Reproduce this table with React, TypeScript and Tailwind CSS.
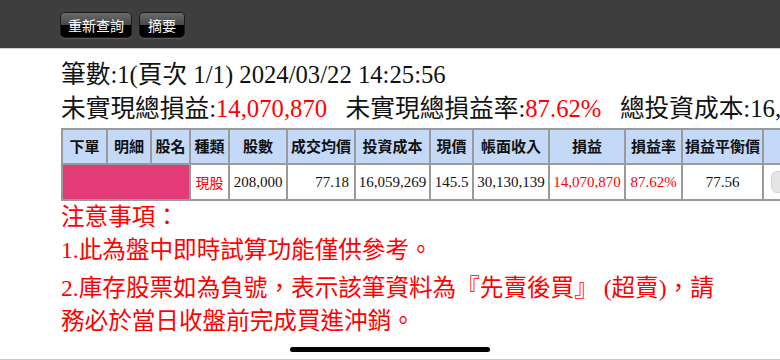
const font = { fontFamily: '"Liberation Serif", "Noto Sans CJK TC", serif' };

const cols = [
  { label: '下單', w: 45 },
  { label: '明細', w: 44 },
  { label: '股名', w: 39 },
  { label: '種類', w: 39 },
  { label: '股數', w: 58 },
  { label: '成交均價', w: 68 },
  { label: '投資成本', w: 75 },
  { label: '現價', w: 43 },
  { label: '帳面收入', w: 76 },
  { label: '損益', w: 76 },
  { label: '損益率', w: 57 },
  { label: '損益平衡價', w: 81 },
  { label: '', w: 60 },
];

const GlossButton = ({ children, width }: { children: React.ReactNode; width: string }) => (
  <button
    className={`relative h-[26px] ${width} rounded-[5px] border border-[#1a1a1a] overflow-hidden shadow-[0_1px_1px_rgba(255,255,255,0.15)] font-['Noto_Sans_CJK_TC',sans-serif] text-[14px] text-white`}
  >
    <span className="absolute inset-x-0 top-0 h-1/2 bg-gradient-to-b from-[#6a6a6a] to-[#484848]" />
    <span className="absolute inset-x-0 bottom-0 h-1/2 bg-black" />
    <span className="relative leading-[24px]">{children}</span>
  </button>
);

export default function App() {
  return (
    <div className="relative w-[780px] h-[360px] overflow-hidden bg-white" style={font}>
      {/* top toolbar */}
      <div className="h-[49px] bg-[#3e3e3e] border-b border-[#cfcfcf] flex items-center pl-[60px] gap-[7px] pt-[2px]">
        <GlossButton width="w-[72px]">重新查詢</GlossButton>
        <GlossButton width="w-[46px]">摘要</GlossButton>
      </div>

      <div className="pl-[61px] pt-[9px]">
        <div className="text-[24.7px] leading-[34px] text-[#111] whitespace-nowrap">
          筆數:1(頁次 1/1) 2024/03/22 14:25:56
        </div>
        <div className="text-[24.7px] leading-[34px] text-[#111] whitespace-nowrap">
          未實現總損益:<span className="text-[#ff0000]">14,070,870</span>
          {'\u00a0\u00a0\u00a0'}未實現總損益率:<span className="text-[#ff0000]">87.62%</span>
          {'\u00a0\u00a0\u00a0'}總投資成本:16,059,269
        </div>

        <table className="mt-[2px] border-collapse table-fixed border-2 border-[#9a9a9a]" style={{ width: 761 }}>
          <colgroup>
            {cols.map((c, i) => (
              <col key={i} style={{ width: c.w }} />
            ))}
          </colgroup>
          <thead>
            <tr className="h-[35px] bg-[#c4d8f8]">
              {cols.map((c, i) => (
                <th
                  key={i}
                  className="border-2 border-[#9a9a9a] p-0 text-[15px] font-bold text-[#111] font-['Noto_Sans_CJK_TC',sans-serif] whitespace-nowrap"
                >
                  {c.label}
                </th>
              ))}
            </tr>
          </thead>
          <tbody>
            <tr className="h-[36px] text-[15px] text-[#111]">
              <td colSpan={3} className="border-2 border-[#9a9a9a] p-0 bg-[#e23b78]" />
              <td className="border-2 border-[#9a9a9a] text-center text-[#ff0000] font-['Noto_Sans_CJK_TC',sans-serif] text-[14px]">
                現股
              </td>
              <td className="border-2 border-[#9a9a9a] text-center">208,000</td>
              <td className="border-2 border-[#9a9a9a] text-right pr-[5px]">77.18</td>
              <td className="border-2 border-[#9a9a9a] text-center">16,059,269</td>
              <td className="border-2 border-[#9a9a9a] text-center">145.5</td>
              <td className="border-2 border-[#9a9a9a] text-center">30,130,139</td>
              <td className="border-2 border-[#9a9a9a] text-center text-[#ff0000]">14,070,870</td>
              <td className="border-2 border-[#9a9a9a] text-center text-[#ff0000]">87.62%</td>
              <td className="border-2 border-[#9a9a9a] text-center">77.56</td>
              <td className="border-2 border-[#9a9a9a] pl-[7px]">
                <div className="h-[22px] w-[50px] rounded-[6px] bg-[#e4e4e4] border border-[#d4d4d4]" />
              </td>
            </tr>
          </tbody>
        </table>

        <div className="text-[23.6px] leading-[33px] text-[#ff0000] whitespace-nowrap">
          <div>注意事項：</div>
          <div>1.此為盤中即時試算功能僅供參考。</div>
          <div className="mt-[5px]">2.庫存股票如為負號，表示該筆資料為『先賣後買』 (超賣)，請</div>
          <div>務必於當日收盤前完成買進沖銷。</div>
        </div>
      </div>

      {/* home indicator */}
      <div className="absolute left-[290px] top-[347px] w-[200px] h-[5px] rounded-full bg-black" />
      <div className="absolute inset-x-0 bottom-0 h-px bg-[#c8c8c8]" />
    </div>
  );
}
